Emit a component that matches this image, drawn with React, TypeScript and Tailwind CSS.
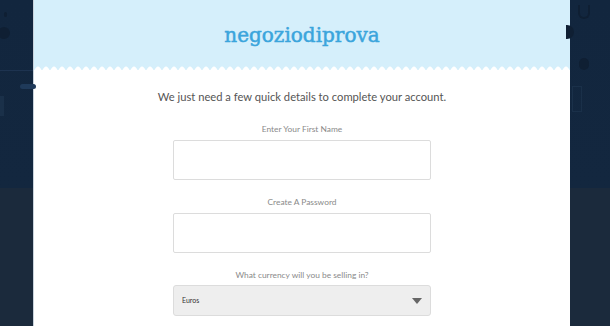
import React from "react";

function Scallops() {
  const bumps = [];
  for (let i = 0; i < 70; i++) {
    const x = i * 8;
    bumps.push(`M${x} 7 Q${x + 4} -2 ${x + 8} 7`);
  }
  return (
    <svg width="537" height="8" viewBox="0 0 537 8" className="block">
      <rect x="0" y="6" width="537" height="2" fill="#ffffff" />
      <path d={bumps.join(" ") + " L560 8 L0 8 Z"} fill="#ffffff" />
    </svg>
  );
}

function Field({ label }: { label: string }) {
  return (
    <div className="flex flex-col items-center shrink-0">
      <div className="text-[8.4px] text-[#8a8a8a] leading-none h-[10px]">{label}</div>
      <div className="mt-[5px] w-[258px] h-[40px] shrink-0 border border-[#dcdcdc] rounded-[2px] bg-white" />
    </div>
  );
}

export default function App() {
  return (
    <div
      className="w-[610px] h-[326px] overflow-hidden flex bg-[linear-gradient(to_bottom,#12263e_0px,#13273f_188px,#1b2a3c_188px,#1b2a3c_326px)]"
      style={{ fontFamily: "Lato, 'Open Sans', sans-serif" }}
    >
      <div className="relative w-[33px] shrink-0">
        <div className="absolute left-[-2px] top-[27px] w-[12px] h-[12px] rounded-full bg-[#0f1f33]" />
        <div className="absolute left-[4px] top-[12px] w-[3px] h-[5px] rounded bg-[#0f1f33]" />
        <div className="absolute left-0 top-[70px] w-[33px] h-[1px] bg-[#1d3350]" />
        <div className="absolute left-[20px] top-[84px] w-[16px] h-[5px] rounded bg-[#1f3a5a]" />
        <div className="absolute left-0 top-[96px] w-[4px] h-[20px] bg-[#1a3049]" />
      </div>
      <div className="w-[537px] shrink-0 bg-white flex flex-col border-l border-[#c9d3dc] overflow-hidden">
        <div className="bg-[#d5effb] h-[64px] shrink-0 flex items-center justify-center pt-[6px]">
          <div
            className="text-[#3ba5dc] text-[20px] [-webkit-text-stroke:0.5px_#3ba5dc]"
            style={{ fontFamily: "'DejaVu Serif', serif" }}
          >
            negoziodiprova
          </div>
        </div>
        <div className="bg-[#d5effb] shrink-0">
          <Scallops />
        </div>
        <div className="flex flex-col items-center shrink-0">
          <div className="mt-[19px] text-[11.2px] text-[#555] leading-none">
            We just need a few quick details to complete your account.
          </div>
          <div className="mt-[23px] flex flex-col gap-[18px] shrink-0">
            <Field label="Enter Your First Name" />
            <Field label="Create A Password" />
            <div className="flex flex-col items-center shrink-0">
              <div className="text-[8.4px] text-[#8a8a8a] leading-none h-[10px]">
                What currency will you be selling in?
              </div>
              <div className="mt-[4px] w-[258px] h-[31px] shrink-0 border border-[#dcdcdc] rounded-[3px] bg-[#eeeeee] flex items-center justify-between pl-[8px] pr-[8px]">
                <span className="text-[7px] text-[#333]">Euros</span>
                <svg width="10" height="6" viewBox="0 0 10 6">
                  <path d="M0 0 L10 0 L5 6 Z" fill="#666" />
                </svg>
              </div>
            </div>
          </div>
        </div>
      </div>
      <div className="relative w-[40px] shrink-0">
        <div className="absolute left-[8px] top-[5px] w-[12px] h-[14px] border-2 border-[#0f1f33] rounded-b-[6px] border-t-0" />
        <div className="absolute left-[-4px] top-[25px] w-[8px] h-[14px] rounded-r-full bg-[#0f1f33]" />
        <div className="absolute left-[9px] top-[58px] w-[10px] h-[12px] rounded-full bg-[#0f1f33]" />
        <div className="absolute left-[2px] top-[86px] w-[10px] h-[26px] border border-[#1a3049]" />
      </div>
    </div>
  );
}
